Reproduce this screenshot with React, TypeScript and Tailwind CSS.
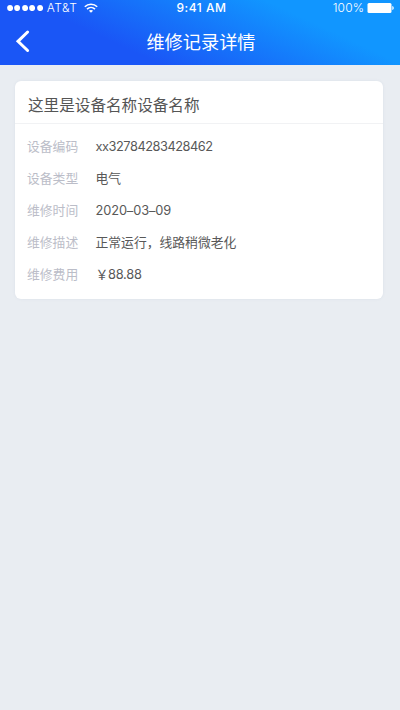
const rows = [
  { label: '设备编码', value: 'xx32784283428462', spacing: 'tracking-[-0.46px]' },
  { label: '设备类型', value: '电气', spacing: '' },
  { label: '维修时间', value: '2020–03–09', spacing: 'tracking-[-0.1px]' },
  { label: '维修描述', value: '正常运行，线路稍微老化', spacing: '' },
  { label: '维修费用', value: '￥88.88', spacing: 'tracking-[-0.25px]' },
];

function StatusBar() {
  return (
    <div className="grid h-4 grid-cols-3 items-center pr-[6px] pl-[7px] text-[12px] leading-4">
      <div className="flex items-center">
        <div className="flex gap-[1.2px]">
          {[0, 1, 2, 3, 4].map((i) => (
            <svg key={i} width="6.2" height="6.2" viewBox="0 0 6.2 6.2" fill="white">
              <circle cx="3.1" cy="3.1" r="3" />
            </svg>
          ))}
        </div>
        <span className="ml-[4px] font-light tracking-[0.5px]">AT&amp;T</span>
        <svg className="ml-[7px]" width="14" height="10" viewBox="0 0 14 10" fill="none" stroke="white" strokeWidth="1.6">
          <path d="M0.8 3.8C4.3 0.3 9.7 0.3 13.2 3.8" />
          <path d="M3 6.1C5.3 3.9 8.7 3.9 11 6.1" />
          <path d="M7 9.7L4.9 7.7C6.1 6.6 7.9 6.6 9.1 7.7Z" fill="white" stroke="none" />
        </svg>
      </div>
      <span className="pl-[2px] text-center text-[12px] font-medium tracking-[0.5px]">9:41 AM</span>
      <div className="flex items-center justify-end">
        <span className="font-light tracking-[0.1px]">100%</span>
        <svg className="ml-[3px]" width="27" height="10" viewBox="0 0 27 10" fill="white">
          <rect x="0.5" width="24" height="10" rx="1.5" />
          <path d="M25.3 3C27.2 3.6 27.2 6.4 25.3 7Z" />
        </svg>
      </div>
    </div>
  );
}

export default function App() {
  return (
    <div lang="zh-CN" className="min-h-[710px] w-[400px] bg-[#e9edf2] font-[Inter,'Noto_Sans_CJK_SC',sans-serif]">
      <header className="h-[65px] bg-[linear-gradient(25deg,#1a56f6_30%,#1196ff_75%)] text-white">
        <StatusBar />
        <div className="grid h-[49px] grid-cols-[60px_1fr_60px] items-center">
          <button className="pl-[14px]" aria-label="返回">
            <svg width="16" height="24" viewBox="0 0 16 24" fill="none" stroke="white" strokeWidth="3" strokeLinecap="round">
              <path d="M13.6 3L4 12.3L13.6 21.5" />
            </svg>
          </button>
          <h1 className="pt-[2px] pl-[2px] text-center text-[18.2px] leading-6">维修记录详情</h1>
        </div>
      </header>
      <main className="px-[15px] pt-4">
        <section className="h-[218px] w-[368px] rounded-[6px] bg-white shadow-[0_0_3px_rgba(130,150,180,0.12)]">
          <h2 className="h-[43px] border-b border-[#f1f2f4] pt-[13px] pl-[13px] text-[15.6px] leading-6 text-[#555]">
            这里是设备名称设备名称
          </h2>
          <dl className="pt-[7px] pl-3 text-[12.8px]">
            {rows.map((row) => (
              <div key={row.label} className="flex h-8 items-center">
                <dt className="w-[68.5px] text-[#bbbdc8]">{row.label}</dt>
                <dd className={`text-[#585858] ${row.spacing}`}>{row.value}</dd>
              </div>
            ))}
          </dl>
        </section>
      </main>
    </div>
  );
}
